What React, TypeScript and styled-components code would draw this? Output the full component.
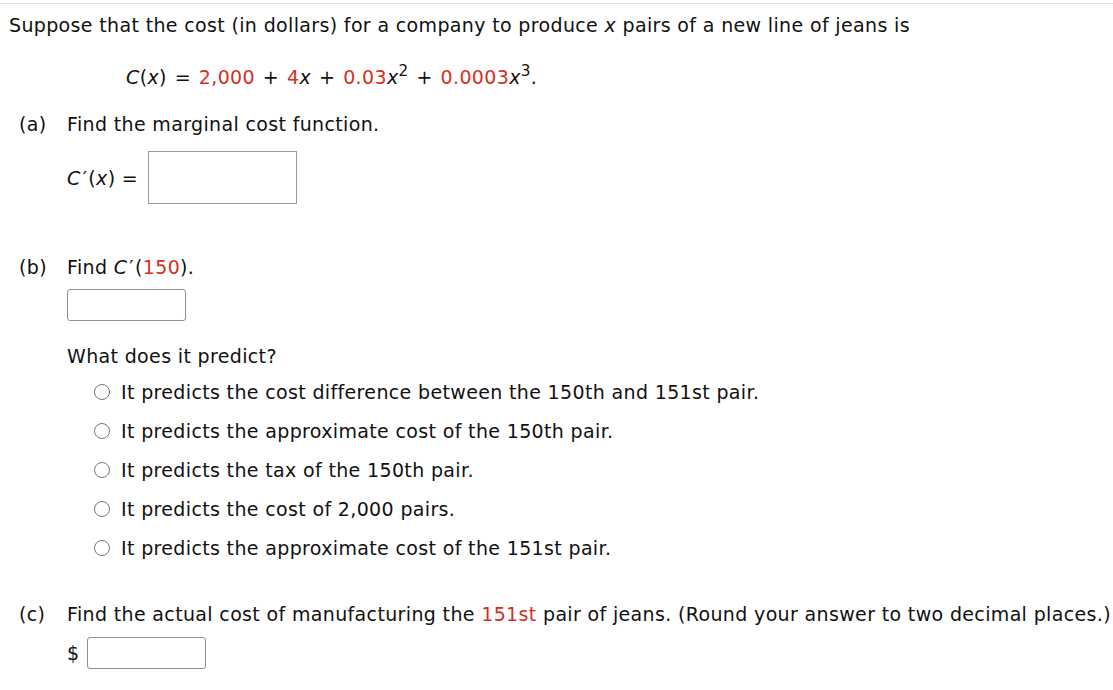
import React from "react";
import styled, { createGlobalStyle } from "styled-components";

const Global = createGlobalStyle`
  html, body { margin: 0; padding: 0; background: #fff; }
  body { font-family: "DejaVu Sans", Verdana, sans-serif; color: #111; }
`;

const Page = styled.div`
  border-top: 1px solid #e2e2e2;
  margin-top: 3px;
  padding: 9px 0 0 9px;
  font-size: 19px;
  line-height: 24px;
  letter-spacing: 0.35px;
`;

const Para = styled.div<{ $mt?: number; $ml?: number; $ws?: number }>`
  margin-top: ${(p) => p.$mt ?? 0}px;
  margin-left: ${(p) => p.$ml ?? 0}px;
  word-spacing: ${(p) => p.$ws ?? 0}px;
  white-space: nowrap;
`;

const Red = styled.span`
  color: #d5301f;
`;

const I = styled.i`
  font-style: italic;
`;

const Prime = styled.span`
  margin: 0 1px 0 2px;
`;

const Sup = styled.sup`
  font-size: 0.8em;
  line-height: 0;
  vertical-align: 0.55em;
`;

const PartRow = styled.div<{ $mt: number }>`
  display: flex;
  margin-top: ${(p) => p.$mt}px;
  margin-left: 10px;
  white-space: nowrap;
`;

const PartLabel = styled.span`
  width: 48px;
  flex: none;
`;

const Indented = styled.div<{ $mt: number; $gap?: number }>`
  margin-left: 58px;
  margin-top: ${(p) => p.$mt}px;
  display: flex;
  align-items: center;
  gap: ${(p) => p.$gap ?? 8}px;
  white-space: nowrap;
`;

const BigBox = styled.div`
  width: 147px;
  height: 51px;
  border: 1px solid #9a9a9a;
  background: #fff;
`;

const SmallBox = styled.div`
  width: 117px;
  height: 30px;
  border: 1px solid #8f8f8f;
  border-radius: 3px;
  background: #fff;
`;

const Options = styled.div`
  margin-left: 85px;
  margin-top: 12px;
  display: flex;
  flex-direction: column;
  gap: 15px;
`;

const Option = styled.label`
  display: flex;
  align-items: center;
  gap: 11px;
  white-space: nowrap;
`;

const Radio = styled.span`
  width: 14px;
  height: 14px;
  border: 1.5px solid #777;
  border-radius: 50%;
  flex: none;
`;

const opts = [
  "It predicts the cost difference between the 150th and 151st pair.",
  "It predicts the approximate cost of the 150th pair.",
  "It predicts the tax of the 150th pair.",
  "It predicts the cost of 2,000 pairs.",
  "It predicts the approximate cost of the 151st pair.",
];

export default function App() {
  return (
    <>
      <Global />
      <Page>
        <Para>
          Suppose that the cost (in dollars) for a company to produce <I>x</I> pairs of a new line of jeans is
        </Para>
        <Para $mt={28} $ml={117} $ws={1.5}>
          <I>C</I>(<I>x</I>) = <Red>2,000</Red> + <Red>4</Red>
          <I>x</I> + <Red>0.03</Red>
          <I>x</I>
          <Sup>2</Sup> + <Red>0.0003</Red>
          <I>x</I>
          <Sup>3</Sup>.
        </Para>
        <PartRow $mt={23}>
          <PartLabel>(a)</PartLabel>
          <span>Find the marginal cost function.</span>
        </PartRow>
        <Indented $mt={15} $gap={10}>
          <span>
            <I>C</I>
            <Prime>′</Prime>(<I>x</I>) =
          </span>
          <BigBox />
        </Indented>
        <PartRow $mt={51}>
          <PartLabel>(b)</PartLabel>
          <span>
            Find <I>C</I>
            <Prime>′</Prime>(<Red>150</Red>).
          </span>
        </PartRow>
        <Indented $mt={10}>
          <SmallBox />
        </Indented>
        <Indented $mt={23}>
          <span>What does it predict?</span>
        </Indented>
        <Options>
          {opts.map((o) => (
            <Option key={o}>
              <Radio />
              <span>{o}</span>
            </Option>
          ))}
        </Options>
        <PartRow $mt={42}>
          <PartLabel>(c)</PartLabel>
          <span>
            Find the actual cost of manufacturing the <Red>151st</Red> pair of jeans. (Round your answer to two decimal places.)
          </span>
        </PartRow>
        <Indented $mt={11}>
          <span>$</span>
          <SmallBox />
        </Indented>
      </Page>
    </>
  );
}
